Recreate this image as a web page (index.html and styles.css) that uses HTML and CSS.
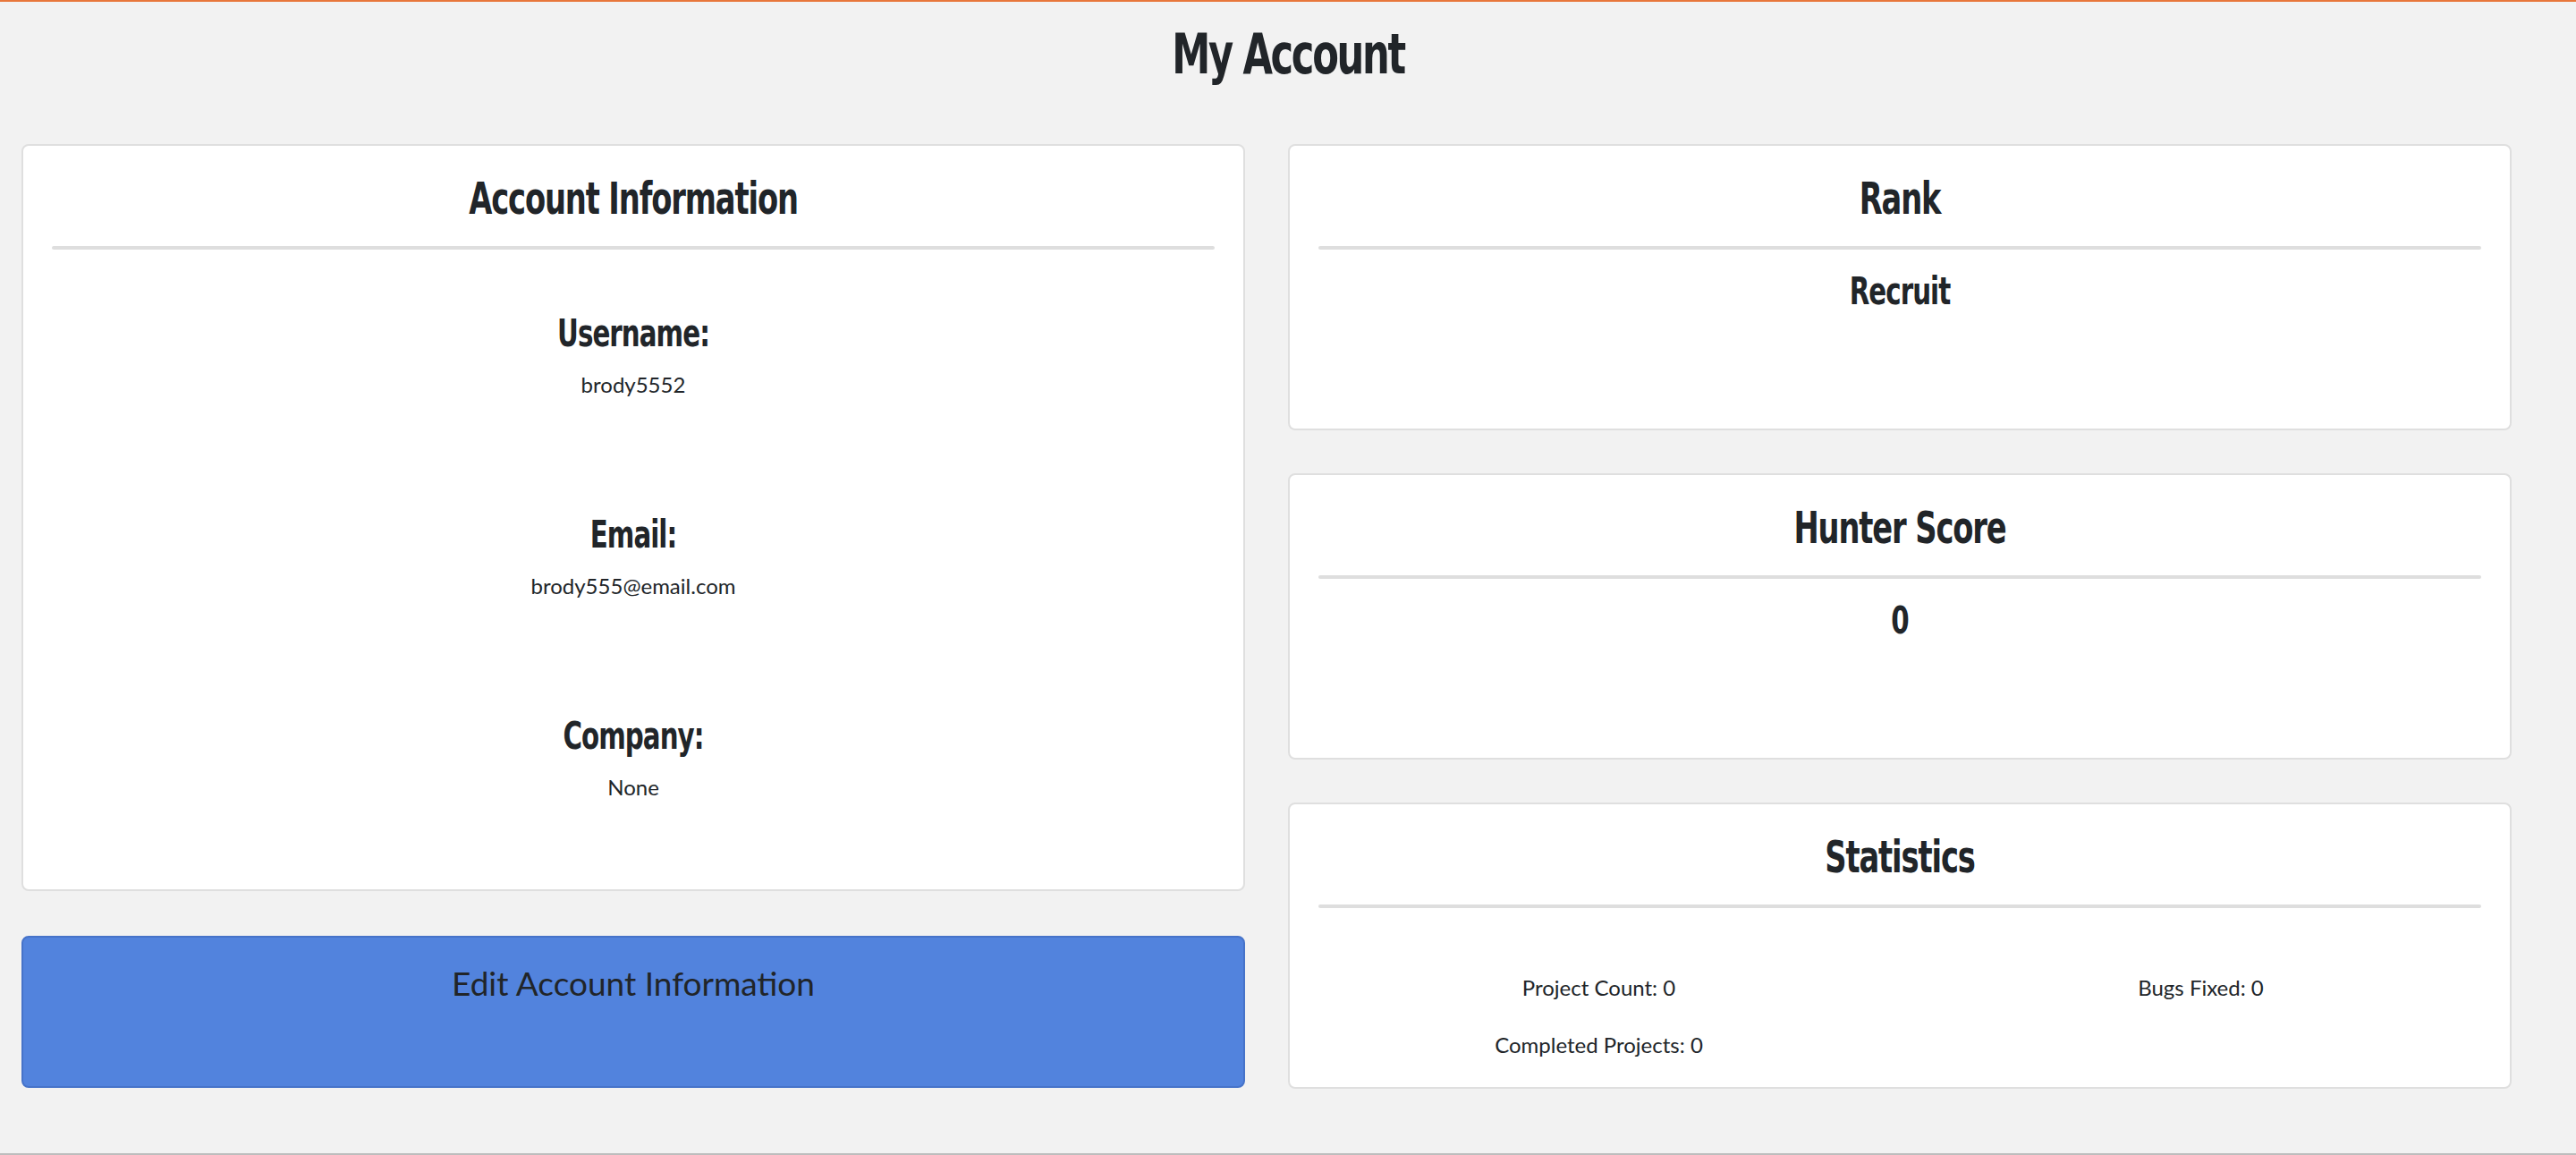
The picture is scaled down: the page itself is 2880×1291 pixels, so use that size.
FILE: index.html
```html
<!DOCTYPE html>
<html lang="en">
<head>
<meta charset="utf-8">
<title>My Account</title>
<link rel="stylesheet" href="styles.css">
</head>
<body>
  <header class="page-header">
    <h1 class="page-title">My Account</h1>
  </header>
  <main class="account-grid">
    <section class="col col-left">
      <div class="card card-info">
        <h2 class="card-title">Account Information</h2>
        <hr class="card-rule">
        <div class="field">
          <h3 class="field-label">Username:</h3>
          <p class="field-value">brody5552</p>
        </div>
        <div class="field">
          <h3 class="field-label">Email:</h3>
          <p class="field-value">brody555@email.com</p>
        </div>
        <div class="field">
          <h3 class="field-label">Company:</h3>
          <p class="field-value">None</p>
        </div>
      </div>
      <a class="edit-btn" href="#">Edit Account Information</a>
    </section>
    <section class="col col-right">
      <div class="card card-small">
        <h2 class="card-title">Rank</h2>
        <hr class="card-rule">
        <h3 class="card-value">Recruit</h3>
      </div>
      <div class="card card-small">
        <h2 class="card-title">Hunter Score</h2>
        <hr class="card-rule">
        <h3 class="card-value">0</h3>
      </div>
      <div class="card card-small">
        <h2 class="card-title">Statistics</h2>
        <hr class="card-rule">
        <div class="stats-grid">
          <p class="stat">Project Count: 0</p>
          <p class="stat">Bugs Fixed: 0</p>
          <p class="stat">Completed Projects: 0</p>
        </div>
      </div>
    </section>
  </main>
</body>
</html>
```
FILE: styles.css
```css
* {
  box-sizing: border-box;
}

html,
body {
  margin: 0;
}

body {
  min-height: 100vh;
  background: #f2f2f2;
  border-top: 2px solid #e8773b;
  border-bottom: 2px solid #bdbdbd;
  font-family: Lato, "Noto Sans", sans-serif;
  color: #212529;
}

.page-title {
  margin: 0;
  padding-top: 28px;
  font-family: "Liberation Sans Narrow", "DejaVu Sans Condensed", sans-serif;
  font-weight: 700;
  font-size: 62px;
  line-height: 62px;
  letter-spacing: -3px;
  text-align: center;
  transform: scaleX(0.775);
}

.account-grid {
  display: grid;
  grid-template-columns: 1368px 1368px;
  column-gap: 48px;
  margin-top: 69px;
  padding: 0 72px 0 24px;
}

.col {
  display: flex;
  flex-direction: column;
}

.col-left {
  gap: 50px;
}

.col-right {
  gap: 48px;
}

.card {
  background: #fff;
  border: 2px solid #dfdfdf;
  border-radius: 8px;
  padding: 34px 32px 0;
  text-align: center;
}

.card-info {
  height: 835px;
}

.card-small {
  height: 320px;
}

.card-title {
  margin: 0;
  font-family: "Liberation Sans Narrow", "DejaVu Sans Condensed", sans-serif;
  font-weight: 700;
  font-size: 50px;
  line-height: 50px;
  letter-spacing: -1.5px;
  transform: scaleX(0.75);
}

.card-rule {
  margin: 28px 0 0;
  height: 4px;
  border: 0;
  border-radius: 2px;
  background: #dedede;
}

.field {
  margin-top: 135px;
}

.card-rule + .field {
  margin-top: 73px;
}

.field-label,
.card-value {
  margin: 0;
  font-family: "Liberation Sans Narrow", "DejaVu Sans Condensed", sans-serif;
  font-weight: 700;
  font-size: 42px;
  line-height: 42px;
  letter-spacing: -1.2px;
  transform: scaleX(0.775);
}

.card-value {
  margin-top: 26px;
}

.field-value {
  margin: 24px 0 0;
  font-size: 24px;
  line-height: 24px;
}

.stats-grid {
  display: grid;
  grid-template-columns: 1fr 1fr;
  row-gap: 40px;
  margin: 77px -23px 0;
}

.stat {
  margin: 0;
  font-size: 24px;
  line-height: 24px;
}

.edit-btn {
  display: block;
  height: 170px;
  padding-top: 32px;
  background: #5283dd;
  border: 2px solid #4673c9;
  border-radius: 8px;
  color: #212529;
  font-size: 37px;
  line-height: 37px;
  text-align: center;
  text-decoration: none;
}
```
